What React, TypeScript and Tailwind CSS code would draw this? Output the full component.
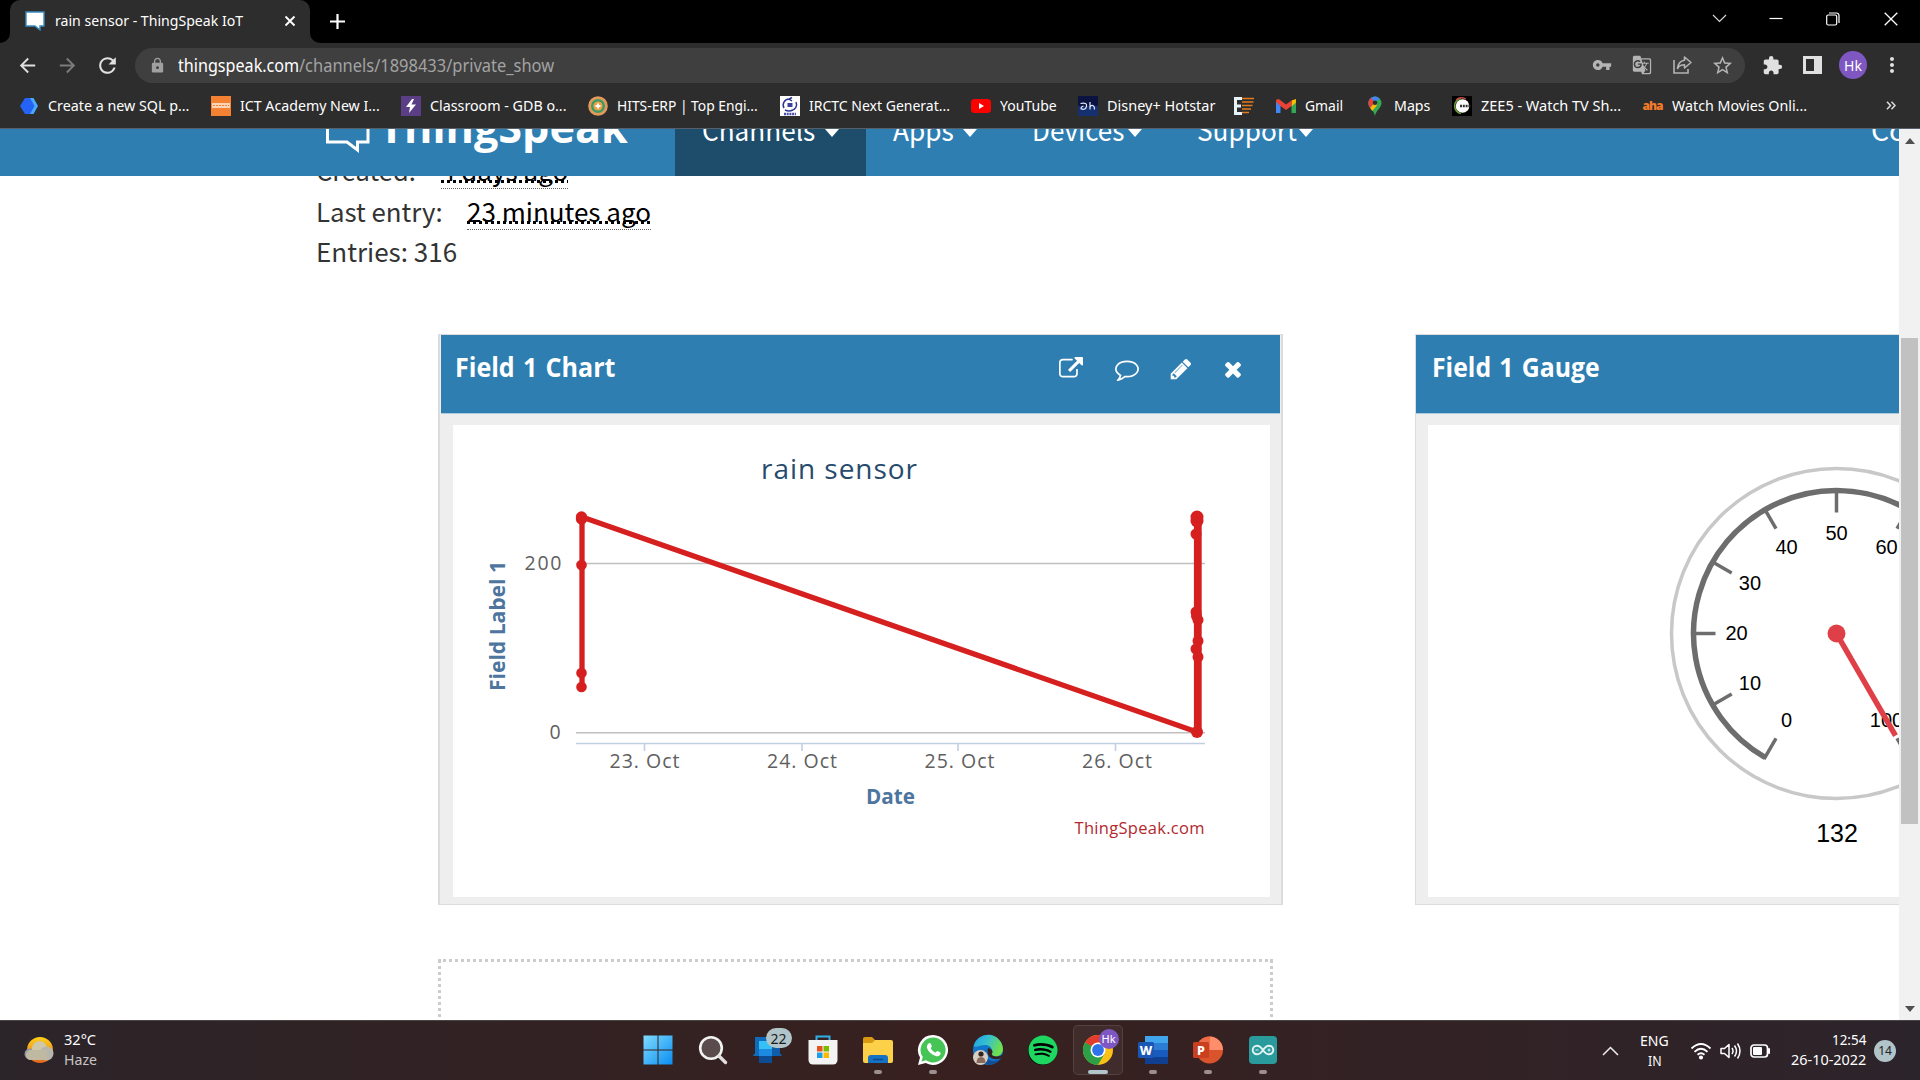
import { useLayoutEffect, useRef, useState } from "react";
import type { ReactNode } from "react";
import { FaSpotify } from "react-icons/fa";
import {
  MdArrowBack, MdArrowForward, MdRefresh, MdLock, MdVpnKey, MdStarBorder, MdExtension, MdMoreVert, MdGTranslate,
} from "react-icons/md";

/** Single-line text squeezed or stretched horizontally to an exact width. */
function Fit({ w, className = "", children }: { w: number; className?: string; children: ReactNode }) {
  const ref = useRef<HTMLSpanElement>(null);
  const [scale, setScale] = useState(1);
  useLayoutEffect(() => {
    if (ref.current) setScale(w / ref.current.offsetWidth);
  }, [w]);
  return (
    <span className={"block shrink-0 whitespace-pre " + className} style={{ width: w }}>
      <span ref={ref} className="inline-block origin-left" style={{ transform: `scaleX(${scale})` }}>
        {children}
      </span>
    </span>
  );
}

/* ---------- browser chrome ---------- */

function TabStrip() {
  return (
    <div className="flex h-[43px] bg-black">
      <div className="flex w-[10px] items-end bg-[#2d2d2d]">
        <div className="h-full w-full rounded-br-[10px] bg-black" />
      </div>
      <div className="flex w-[300px] items-center rounded-t-[10px] bg-[#2d2d2d] pl-[15px]">
        <svg className="-mt-px" width="20" height="20" viewBox="0 0 20 20">
          <path d="M1 1h18v14h-4v4l-5-4H1z" fill="#fff" stroke="#3a8bc0" strokeWidth="1.4" />
        </svg>
        <Fit w={188} className="-mt-[3px] ml-[10px] text-[15px] leading-5 text-white">rain sensor - ThingSpeak IoT</Fit>
        <svg className="-mt-px ml-[41px]" width="12" height="12" viewBox="0 0 12 12">
          <path d="M1.500 1.500l9 9M10.500 1.500l-9 9" stroke="#fff" strokeWidth="1.900" />
        </svg>
      </div>
      <div className="w-[10px] bg-[#2d2d2d]"><div className="h-full w-full rounded-bl-[10px] bg-black" /></div>
      <svg className="ml-[9px] mt-[13px]" width="17" height="17" viewBox="0 0 17 17">
        <path d="M8.500 1v15M1 8.500h15" stroke="#fff" strokeWidth="2.200" />
      </svg>
      <div className="ml-auto flex h-[37px] items-center">
        <svg className="mr-[41px]" width="15" height="9" viewBox="0 0 15 9"><path d="M1 1l6.500 6.500L14 1" fill="none" stroke="#ddd" strokeWidth="1.100" /></svg>
        <svg className="mr-[43px]" width="15" height="9" viewBox="0 0 15 9"><path d="M1.500 4.500h13" stroke="#fff" strokeWidth="1.200" /></svg>
        <svg className="mr-[44px]" width="14" height="14" viewBox="0 0 14 14">
          <rect x="0.700" y="3" width="10" height="10" rx="1.500" fill="none" stroke="#fff" strokeWidth="1.200" />
          <path d="M3 1h7.500a2.500 2.500 0 0 1 2.500 2.500V11" fill="none" stroke="#fff" strokeWidth="1.200" />
        </svg>
        <svg className="mr-[22px]" width="14" height="14" viewBox="0 0 14 14"><path d="M.7.7l12.600 12.600M13.300.7L.7 13.300" stroke="#fff" strokeWidth="1.300" /></svg>
      </div>
    </div>
  );
}

function Toolbar() {
  return (
    <div className="flex h-[44px] items-center pl-[16px] text-[#e0e0e0]">
      <MdArrowBack size={23} />
      <MdArrowForward size={23} className="ml-[17px] text-[#7c7c7c]" />
      <MdRefresh size={25} className="ml-[16px]" />
      <div className="ml-[15px] flex h-[35px] w-[1610px] items-center rounded-full bg-[#3f3f3f] pl-[14px] text-[#b4b4b4]">
        <MdLock size={17} className="text-[#a0a0a0]" />
        <Fit w={121} className="ml-[12px] text-[18px] text-white">thingspeak.com</Fit>
        <Fit w={255} className="text-[18px] text-[#a3a3a3]">/channels/1898433/private_show</Fit>
        <div className="ml-auto flex items-center pr-[11px]">
          <MdVpnKey size={20} />
          <MdGTranslate size={20} className="ml-[20px]" />
          <svg className="ml-[20px]" width="21" height="20" viewBox="0 0 21 20" fill="none" stroke="currentColor" strokeWidth="1.600">
            <path d="M2 5v13h14v-4" />
            <path d="M12.500 2l6.500 5.500-6.500 5.500V9.800C9 9.800 7 11 5.500 13.500 6 9 8 5.800 12.500 5.200z" strokeLinejoin="round" />
          </svg>
          <MdStarBorder size={23} className="ml-[18px]" />
        </div>
      </div>
      <MdExtension size={21} className="ml-[17px]" />
      <svg className="ml-[20px]" width="19" height="18" viewBox="0 0 19 18"><path d="M0 0h19v18H0zM3 3v12h8V3z" fill="#e0e0e0" fillRule="evenodd" /></svg>
      <span className="ml-[17px] flex h-7 w-7 items-center justify-center rounded-full bg-[#7e57c2] text-[14px] text-white">Hk</span>
      <MdMoreVert size={24} className="ml-[13px]" />
    </div>
  );
}

const bookmarks: { label: string; w: number; gap: number; icon: ReactNode }[] = [
  { label: "Create a new SQL p...", w: 141, gap: 22, icon: (
    <svg width="20" height="18" viewBox="0 0 20 18"><path d="M9 1h5.500l4.500 8-4.500 8H9z" fill="#4aa8ff" /><path d="M6 1h5l4.500 8-4.500 8H6L1 9z" fill="#2463f5" /></svg>) },
  { label: "ICT Academy New I...", w: 140, gap: 21, icon: (
    <svg width="20" height="20" viewBox="0 0 20 20"><path d="M0 0h20v20H0z" fill="#f58233" /><path d="M1 7h18v5H1z" fill="#fbd3b5" /><path d="M2 9.500h16" stroke="#f58233" strokeWidth="1" strokeDasharray="2 1" /></svg>) },
  { label: "Classroom - GDB o...", w: 137, gap: 21, icon: (
    <svg width="20" height="20" viewBox="0 0 20 20"><path d="M0 0h20v20H0z" fill="#5b3f86" /><path d="M11 3L5 11h4l-1 6 7-8.500h-4.500L13 3z" fill="#fff" /></svg>) },
  { label: "HITS-ERP | Top Engi...", w: 141, gap: 22, icon: (
    <svg width="20" height="20" viewBox="0 0 20 20"><circle cx="10" cy="10" r="9.800" fill="#e59a5c" /><circle cx="10" cy="10" r="7" fill="#3f9b62" /><circle cx="10" cy="10" r="4.600" fill="#f0a04b" /><path d="M10 7.500v5M7.500 10h5" stroke="#fff" strokeWidth="1.800" /></svg>) },
  { label: "IRCTC Next Generat...", w: 141, gap: 21, icon: (
    <svg width="20" height="20" viewBox="0 0 20 20"><path d="M0 0h20v20H0z" fill="#fff" /><path d="M4 12a6 6 0 0 1 5-9M16 6a6 6 0 0 1-5 8.500M5 14q4 2 8 0M12 1.500l-3 1.500 3 2" fill="none" stroke="#2c3593" strokeWidth="1.500" /><path d="M7.500 7h5v4h-5z" fill="#3a3f9a" /><path d="M4 18h12" stroke="#4b4fa8" strokeWidth="2.400" strokeDasharray="2 .7" /></svg>) },
  { label: "YouTube", w: 57, gap: 21, icon: (
    <svg width="20" height="20" viewBox="0 0 20 20"><rect y="3" width="20" height="14" rx="3.500" fill="#f00" /><path d="M8 7l5 3-5 3z" fill="#fff" /></svg>) },
  { label: "Disney+ Hotstar", w: 108, gap: 19, icon: (
    <svg width="20" height="20" viewBox="0 0 20 20"><path d="M0 0h20v10H0z" fill="#0b1440" /><path d="M0 10h20v10H0z" fill="#16306f" /><path d="M2.500 7.500q7-1.500 6 2.800t-5.500 2.500q0-2.300 2.500-2.800M12 6v7.500M12 11q1-2 2.800-1.500t1.700 4" fill="none" stroke="#dfe9ff" strokeWidth="1.200" /></svg>) },
  { label: "", w: 0, gap: 13, icon: (
    <svg width="20" height="20" viewBox="0 0 20 20"><path d="M0 2.500h8M1.500 1v18M0 10h7M0 17.500h8" stroke="#e8f2fb" strokeWidth="3" /><path d="M8 2.500h12M8 6h11.500M8 9.500h10.500M8 13h9M8 16.500h7" stroke="#e07b1f" strokeWidth="1.600" /></svg>) },
  { label: "Gmail", w: 38, gap: 22, icon: (
    <svg width="20" height="20" viewBox="0 0 20 20"><path d="M0 5v12h4.500V8z" fill="#4285f4" /><path d="M20 5v12h-4.500V8z" fill="#34a853" /><path d="M15.500 4.500L20 3v3.500l-4.500 4z" fill="#fbbc04" /><path d="M0 6V4.500q1-2.500 3.500-1L10 8.500l5.500-4v5.500L10 14 4.500 10z" fill="#ea4335" /></svg>) },
  { label: "Maps", w: 36, gap: 22, icon: (
    <svg width="20" height="20" viewBox="0 0 20 20"><path d="M3.500 7a6.500 6.500 0 0 1 13 0c0 5-5.500 7-6.500 13-1-6-6.500-8-6.500-13z" fill="#34a853" /><path d="M3.500 7a6.500 6.500 0 0 1 11-4.600L5.200 12C4 10.500 3.500 9 3.500 7z" fill="#4285f4" /><path d="M3.500 7q0-3 2-5l4.500 4-4.800 6C4 10.500 3.500 9 3.500 7z" fill="#ea4335" /><path d="M5.200 12l5-6 2 3-5 6z" fill="#fbbc04" /><circle cx="10" cy="6.800" r="2.300" fill="#2d2d2d" /></svg>) },
  { label: "ZEE5 - Watch TV Sh...", w: 140, gap: 22, icon: (
    <svg width="20" height="20" viewBox="0 0 20 20"><path d="M0 0h20v20H0z" fill="#000" /><circle cx="10.500" cy="10" r="6.800" fill="#fff" /><path d="M9 2.500a7.600 7.600 0 0 0 0 15" fill="none" stroke="#6a9b3c" strokeWidth="1.600" /><path d="M4 4q4-4 10-1" fill="none" stroke="#c04a3c" strokeWidth="1.300" /><path d="M8 10h11" stroke="#333" strokeWidth="2.500" strokeDasharray="2 .8" /></svg>) },
  { label: "Watch Movies Onli...", w: 135, gap: 9, icon: (
    <span className="flex w-5 justify-center font-[Open_Sans] text-[12px] font-extrabold leading-5 tracking-[-0.08em] text-[#f47b2a]">aha</span>) },
];

function Bookmarks() {
  return (
    <div className="flex h-[42px] items-start border-b border-[#55606a] pl-[18.500px] pt-[9px]">
      {bookmarks.map((b) => (
        <div key={b.label} className="flex shrink-0 items-center">
          <span className="mr-[9px] flex h-5 w-5 items-center justify-center">{b.icon}</span>
          {b.label && <Fit w={b.w} className="-mt-[2px] text-[15px] leading-5 text-white">{b.label}</Fit>}
          <span className="block h-1" style={{ width: b.gap }} />
        </div>
      ))}
      <svg className="ml-auto mr-[24px] mt-[5px]" width="10" height="9" viewBox="0 0 10 9"><path d="M1 .8l3.500 3.700L1 8.200M5.500.8L9 4.500 5.500 8.200" fill="none" stroke="#ddd" strokeWidth="1.500" /></svg>
    </div>
  );
}

/* ---------- ThingSpeak page ---------- */

function Caret() {
  return <svg width="16" height="9" viewBox="0 0 16 9"><path d="M1 0h14L8 8z" fill="#fff" /></svg>;
}

function NavItem({ label, w, caret, className = "" }: { label: string; w: number; caret: number; className?: string }) {
  return (
    <div className={"flex h-full shrink-0 " + className}>
      <Fit w={w} className="-mt-[14px] text-[28px] leading-[28px]">{label}</Fit>
      <span style={{ marginLeft: caret }}><Caret /></span>
    </div>
  );
}

function SiteNav() {
  return (
    <div className="flex h-[47px] overflow-hidden bg-[#2e7eb2] font-['Noto_Sans_CJK_SC',sans-serif] text-white">
      <svg className="ml-[325px] shrink-0" width="46" height="26" viewBox="0 0 46 26">
        <path d="M2.500-10v23H22l10.500 8V13H43V-10" fill="none" stroke="#fff" strokeWidth="3" />
      </svg>
      <Fit w={249} className="-mt-[32px] ml-[8px] h-[60px] font-[Open_Sans] text-[43px] font-bold leading-[60px]">ThingSpeak</Fit>
      <NavItem label="Channels" w={113} caret={9} className="ml-[47px] w-[191px] bg-[#1d4d6b] pl-[27px]" />
      <NavItem label="Apps" w={61} caret={8} className="ml-[27px]" />
      <NavItem label="Devices" w={92} caret={3} className="ml-[54px]" />
      <NavItem label="Support" w={100} caret={1} className="ml-[54px]" />
      <Fit w={160} className="-mt-[14px] ml-auto -mr-[132px] text-[28px] leading-[28px]">Commercial</Fit>
    </div>
  );
}

function Ago({ w, children }: { w: number; children: string }) {
  return (
    <span className="block h-[39px] border-b border-dotted border-[#666] text-black">
      <Fit w={w} className="leading-[40px]">
        <span className="underline decoration-dotted decoration-[2.500px] underline-offset-[-1px] [text-decoration-skip-ink:none]">{children}</span>
      </Fit>
    </span>
  );
}

function ChannelInfo() {
  return (
    <div className="-mt-[26px] flex h-[120px] shrink-0 flex-col pl-[316px] font-['Noto_Sans_CJK_SC',sans-serif] text-[26px] text-[#333]">
      <div className="flex h-[41px]"><Fit w={100} className="leading-[40px]">Created:</Fit><span className="w-[25px]" /><Ago w={127}>4 days ago</Ago></div>
      <div className="flex h-[41px]"><Fit w={127} className="leading-[40px]">Last entry:</Fit><span className="w-[24px]" /><Ago w={184}>23 minutes ago</Ago></div>
      <Fit w={141} className="leading-[38px]">Entries: 316</Fit>
    </div>
  );
}

const rightMarkers = [[1197, 517, 6.5], [1197, 521, 6.5], [1196, 534, 5.5], [1196, 612, 5.5], [1196.5, 616, 5.5], [1198, 620, 5.5], [1198, 641, 5.5], [1196, 649, 5.5], [1198, 657, 5.5], [1197, 732, 6]];
const leftMarkers = [[581.5, 517, 5.7], [581.5, 519, 5.7], [581.5, 565, 5.3], [581.5, 673, 5.3], [581.5, 687, 5.3]];
const days: [string, number][] = [["23. Oct", 644.5], ["24. Oct", 802], ["25. Oct", 959.5], ["26. Oct", 1117]];

function RainChart() {
  return (
    <svg width="817" height="472" viewBox="453 425 817 472" fontFamily="'Open Sans', sans-serif">
      <text x="761" y="478.500" fontSize="28" fill="#274b6d" textLength="156">rain sensor</text>
      <path d="M576 563.500h629M576 732.700h629" stroke="#c0c0c0" strokeWidth="1.600" />
      <path d="M576 743.500h629M644.500 743v8M802 743v8M958 743v8M1115.500 743v8" stroke="#c0d0e0" strokeWidth="1.600" />
      <g fontSize="19.500" fill="#606060">
        <text x="524.500" y="570" textLength="37">200</text>
        <text x="549.500" y="739">0</text>
        {days.map(([d, x]) => <text key={d} x={x - 35} y="768" textLength="70">{d}</text>)}
      </g>
      <g fontSize="22" fontWeight="700" fill="#4d759e">
        <text x="866" y="804" textLength="49" lengthAdjust="spacingAndGlyphs">Date</text>
        <text transform="translate(505 691) rotate(-90)" textLength="130" lengthAdjust="spacingAndGlyphs">Field Label 1</text>
      </g>
      <text x="1074.500" y="834" fontSize="16.500" fill="#b3282d" textLength="130">ThingSpeak.com</text>
      <path d="M582 687V517L1197 732" fill="none" stroke="#d62020" strokeWidth="5.300" strokeLinejoin="round" />
      <path d="M1197.800 732V517" stroke="#d62020" strokeWidth="7.800" />
      {[...leftMarkers, ...rightMarkers].map(([x, y, r]) => <circle key={`${x}-${y}`} cx={x} cy={y} r={r} fill="#d62020" />)}
    </svg>
  );
}

function Gauge() {
  const cx = 1836.5, cy = 633.5;
  const at = (v: number, r: number) => {
    const a = ((-150 + v * 3) * Math.PI) / 180;
    return [cx + r * Math.sin(a), cy - r * Math.cos(a)];
  };
  const values = [0, 10, 20, 30, 40, 50, 60, 70, 80, 90, 100];
  const [sx, sy] = at(0, 143);
  const [ex, ey] = at(100, 143);
  const [nx, ny] = at(100, 118);
  return (
    <svg width="817" height="472" viewBox="1428 425 817 472" fontFamily="'Liberation Sans', Arial, sans-serif">
      <circle cx={cx} cy={cy} r="165" fill="#fff" stroke="#c8c8c8" strokeWidth="3.500" />
      <path d={`M${sx} ${sy}A143 143 0 1 1 ${ex} ${ey}`} fill="none" stroke="#6d6d6d" strokeWidth="5.500" />
      {values.map((v) => {
        const [x1, y1] = at(v, 145), [x2, y2] = at(v, 121), [tx, ty] = at(v, 100);
        return (
          <g key={v}>
            <path d={`M${x1} ${y1}L${x2} ${y2}`} stroke="#6d6d6d" strokeWidth="3.500" />
            <text x={tx} y={ty + 6.8} textAnchor="middle" fontSize="20">{v}</text>
          </g>
        );
      })}
      <path d={`M${cx} ${cy}L${nx} ${ny}`} stroke="#df4048" strokeWidth="5.500" />
      <circle cx={cx} cy={cy} r="9" fill="#df4048" />
      <text x={cx + 0.5} y="842" textAnchor="middle" fontSize="25">132</text>
    </svg>
  );
}

const headerIcons: [string, number, string][] = [
  ["open", 32, "M1408 928v320q0 119-84.5 203.5t-203.5 84.5h-832q-119 0-203.5-84.5t-84.5-203.5v-832q0-119 84.5-203.5t203.5-84.5h704q14 0 23 9t9 23v64q0 14-9 23t-23 9h-704q-66 0-113 47t-47 113v832q0 66 47 113t113 47h832q66 0 113-47t47-113v-320q0-14 9-23t23-9h64q14 0 23 9t9 23zm384-864v512q0 26-19 45t-45 19-45-19l-176-176-652 652q-10 10-23 10t-23-10l-114-114q-10-10-10-23t10-23l652-652-176-176q-19-19-19-45t19-45 45-19h512q26 0 45 19t19 45z"],
  ["comment", 30, "M896 384q-204 0-381.500 69.500t-282 187.500-104.500 255q0 112 71.500 213.500t201.500 175.500l87 50-27 96q-24 91-70 172 152-63 275-171l43-38 57 6q69 8 130 8 204 0 381.500-69.500t282-187.500 104.500-255-104.500-255-282-187.500-381.500-69.500zm896 512q0 174-120 321.500t-326 233-450 85.500q-70 0-145-8-198 175-460 242-49 14-114 22h-5q-15 0-27-10.500t-16-27.500v-1q-3-4-.5-12t2-10 4.500-9.500l6-9 7-8.500 8-9q7-8 31-34.500t34.500-38 31-39.500 32.500-51 27-59 26-76q-157-89-247.500-220t-90.500-281q0-174 120-321.500t326-233 450-85.500 450 85.500 326 233 120 321.500z"],
  ["edit", 28, "M491 1536l91-91-235-235-91 91v107h128v128h107zm523-928q0-22-22-22-10 0-17 7l-542 542q-7 7-7 17 0 22 22 22 10 0 17-7l542-542q7-7 7-17zm-54-192l416 416-832 832h-416v-416zm683 96q0 53-37 90l-166 166-416-416 166-165q36-38 90-38 53 0 91 38l235 234q37 39 37 91z"],
  ["close", 0, "M1490 1322q0 40-28 68l-136 136q-28 28-68 28t-68-28l-294-294-294 294q-28 28-68 28t-68-28l-136-136q-28-28-28-68t28-68l294-294-294-294q-28-28-28-68t28-68l136-136q28-28 68-28t68 28l294 294 294-294q28-28 68-28t68 28l136 136q28 28 28 68t-28 68l-294 294 294 294q28 28 28 68z"],
];

function Panel({ title, titleWidth, edge, inset, icons, children }: { title: string; titleWidth: number; edge: string; inset: string; icons?: boolean; children: ReactNode }) {
  return (
    <section className={"h-[571px] w-[845px] shrink-0 border-y border-r-2 border-[#dcdcdc] bg-[#eee] " + edge}>
      <header className={"flex h-[79px] w-[839px] border-b border-[#a9cbe0] bg-[#2e7eb2] pt-[16px] " + inset}>
        <Fit w={titleWidth} className="-mt-px font-[Open_Sans] text-[26px] font-bold leading-[34px] text-white [word-spacing:0.07em]">{title}</Fit>
        {icons && (
          <div className="ml-auto mr-[35px] mt-[1px] flex h-[34px] items-center">
            {headerIcons.map(([name, gap, d]) => (
              <svg key={name} className="shrink-0" width={24} height={24} viewBox="0 0 1792 1792" fill="#fff" style={{ marginRight: gap }}>
                <path d={d} />
              </svg>
            ))}
          </div>
        )}
      </header>
      <div className="ml-[12px] mt-[11px] h-[472px] w-[817px] bg-white">{children}</div>
    </section>
  );
}

function Scrollbar() {
  return (
    <div className="flex w-[21px] flex-col items-center bg-[#f1f1f1]">
      <svg className="mt-[9px] shrink-0" width="10" height="6" viewBox="0 0 10 6"><path d="M0 6l5-6 5 6z" fill="#505050" /></svg>
      <div className="mt-[194px] h-[486px] w-[17px] bg-[#c1c1c1]" />
      <svg className="mb-[8px] mt-auto shrink-0" width="10" height="6" viewBox="0 0 10 6"><path d="M0 0l5 6 5-6z" fill="#505050" /></svg>
    </div>
  );
}

/* ---------- taskbar ---------- */

const tb = "h-[32px] w-[32px]";
const apps: { name: string; run?: boolean; active?: boolean; icon: ReactNode }[] = [
  { name: "start", icon: (
    <svg className={tb} viewBox="0 0 32 32"><defs><linearGradient id="win" x1="0" y1="0" x2="1" y2="1"><stop offset="0" stopColor="#7fdcff" /><stop offset="1" stopColor="#0a8df0" /></linearGradient></defs>
      <path d="M1.500 1.500h14v14h-14zM16.500 1.500h14v14h-14zM1.500 16.500h14v14h-14zM16.500 16.500h14v14h-14z" fill="url(#win)" /></svg>) },
  { name: "search", icon: (
    <svg className={tb} viewBox="0 0 32 32"><circle cx="14" cy="14" r="10.800" fill="#5a4c4c" stroke="#f2f2f2" strokeWidth="2.600" /><path d="M22 22l6.500 6.500" stroke="#e3dede" strokeWidth="3.400" strokeLinecap="round" /></svg>) },
  { name: "people", icon: (
    <span className="relative">
      <svg className={tb} viewBox="0 0 32 32"><path d="M3 3h16v19H1.500V20H3z" fill="#0f6cbd" /><path d="M19 8h9v12h1.500v2H19z" fill="#0f5ca8" /><path d="M7 7h13v22H7z" fill="#1b8ae0" /><path d="M7 7h13v8H7z" fill="#35c1f5" /><path d="M7 22h13v7H7z" fill="#0c4c94" /></svg>
      <span className="absolute -top-[6px] left-[14px] flex h-[20px] w-[26px] items-center justify-center rounded-full bg-[#b0c4c9] text-[14px] text-[#1b1b1b]">22</span>
    </span>) },
  { name: "store", icon: (
    <svg className={tb} viewBox="0 0 32 32"><path d="M9.500 7V2.500h13V7" fill="none" stroke="#2fb0e6" strokeWidth="2" /><path d="M1.500 6h29v20a4.500 4.500 0 0 1-4.500 4.500H6A4.500 4.500 0 0 1 1.500 26z" fill="#f3f3f3" /><path d="M10 12h5.500v5.500H10z" fill="#e8501f" /><path d="M16.500 12H22v5.500h-5.500z" fill="#7cba00" /><path d="M10 18.500h5.500V24H10z" fill="#1a9fe8" /><path d="M16.500 18.500H22V24h-5.500z" fill="#fdb900" /></svg>) },
  { name: "files", run: true, icon: (
    <svg className={tb} viewBox="0 0 32 32"><path d="M1 5a2 2 0 0 1 2-2h7l3 3v7H1z" fill="#d99a12" /><path d="M1 9h9l3-3h16a2 2 0 0 1 2 2v19a2 2 0 0 1-2 2H3a2 2 0 0 1-2-2z" fill="#fdd04a" /><path d="M6 29v-5a3 3 0 0 1 3-3h14a3 3 0 0 1 3 3v5z" fill="#1571c4" /><path d="M11 25.500h10" stroke="#0b4a8c" strokeWidth="1.500" /></svg>) },
  { name: "whatsapp", run: true, icon: (
    <svg className={tb} viewBox="0 0 32 32"><path d="M16 1a15 15 0 1 1-7.300 28.100L1 31l2-7.500A15 15 0 0 1 16 1z" fill="#fff" /><path d="M16 3.500A12.500 12.500 0 1 1 9 26.300L4.500 27.500l1.300-4.400A12.500 12.500 0 0 1 16 3.500z" fill="#46c556" /><path d="M11.500 9.500c1-1 2-.6 2.400.4l.9 2.200c.3.800-1.300 1.800-.9 2.500 1 1.800 2.400 3 4.200 3.900.8.400 1.700-1.700 2.500-1.400l2.300 1.100c1 .5 1 1.400.2 2.500-1 1.300-2.700 1.900-4.300 1.400-4.300-1.300-7.400-4-8.800-8-.5-1.700.3-3.500 1.500-4.600z" fill="#fff" /></svg>) },
  { name: "edge", icon: (
    <svg className={tb} viewBox="0 0 32 32"><defs><linearGradient id="edgeA" x1="0" y1="0" x2="1" y2=".4"><stop offset="0" stopColor="#1f9be8" /><stop offset=".5" stopColor="#35c0cf" /><stop offset="1" stopColor="#6fe04c" /></linearGradient></defs>
      <circle cx="16" cy="16" r="15" fill="#1177cc" /><path d="M1.500 12A15 15 0 0 1 31 15c0 5-4 7.500-8 7.500-3 0-5-1.500-4-3 2.500-3.500 0-8.500-6-8.500-5 0-9 3-11.500 1z" fill="url(#edgeA)" /><path d="M14 16c-2 6 2 11 8 11 3 0 6-1.500 8-3.500C27 28 22 31 17 31c-8-2-10-11-3-15z" fill="#124f96" /><path d="M16 14q5 1 4.500 4.500-2.500 3 3.500 4 5 .3 7-3-1 4-3 5-7 2-11-2-2.500-4-1-8.500z" fill="#352020" />
      <circle cx="8.500" cy="23.500" r="7.500" fill="#d8cfc4" /><circle cx="9" cy="20" r="2.600" fill="#35251f" /><path d="M4.500 29q0-6 4.500-6t4.500 6z" fill="#8a6a5a" /></svg>) },
  { name: "spotify", icon: <span className="flex h-[29px] w-[29px] items-center justify-center rounded-full bg-black"><FaSpotify size={30} color="#1ed760" className="shrink-0" /></span> },
  { name: "chrome", active: true, icon: (
    <span className="relative">
      <svg className={tb} viewBox="0 0 32 32"><circle cx="16" cy="16" r="15" fill="#fbc116" /><path d="M16 16L3 8.500A15 15 0 0 1 29 8.500H16z" fill="#e33b2e" /><path d="M3 8.500A15 15 0 0 0 16 31l6.500-11.200L16 16z" fill="#2c9f47" /><path d="M3 8.500l6.500 11.300L16 16z" fill="#2c9f47" /><circle cx="16" cy="16" r="7.500" fill="#fff" /><circle cx="16" cy="16" r="5.900" fill="#2f73ea" /></svg>
      <span className="absolute -top-[5px] left-[17px] flex h-[20px] w-[20px] items-center justify-center rounded-full bg-[#7e57c2] text-[11px] text-white">Hk</span>
    </span>) },
  { name: "word", run: true, icon: (
    <svg className={tb} viewBox="0 0 32 32"><path d="M8 2h23v7H8z" fill="#41a5ee" /><path d="M8 9h23v7H8z" fill="#2b7cd3" /><path d="M8 16h23v7H8z" fill="#185abd" /><path d="M8 23h23v7H8z" fill="#103f91" /><rect x="1" y="8" width="16" height="16" rx="1.500" fill="#1a56b4" /><text x="9" y="20.500" textAnchor="middle" fontSize="12.500" fontWeight="800" fill="#fff">W</text></svg>) },
  { name: "powerpoint", run: true, icon: (
    <svg className={tb} viewBox="0 0 32 32"><circle cx="17.500" cy="16" r="13.500" fill="#d9532c" /><path d="M17.500 2.500A13.500 13.500 0 0 1 31 16H17.500z" fill="#ff8f6b" /><path d="M17.500 2.500A13.500 13.500 0 0 0 4 16h13.500z" fill="#ed6c47" /><rect x="1" y="8" width="16" height="16" rx="1.500" fill="#c8401f" /><text x="9" y="20.500" textAnchor="middle" fontSize="12.500" fontWeight="800" fill="#fff">P</text></svg>) },
  { name: "arduino", run: true, icon: (
    <svg className={tb} viewBox="0 0 32 32"><rect x="2" y="2" width="28" height="28" rx="4" fill="#2a9b9c" /><path d="M16 16c-2-3-4-4.300-6-4.300a4.300 4.300 0 0 0 0 8.600c2 0 4-1.300 6-4.300s4-4.300 6-4.300a4.300 4.300 0 0 1 0 8.600c-2 0-4-1.300-6-4.300z" fill="none" stroke="#e3f3f3" strokeWidth="1.900" /><path d="M8.500 16h3M20.500 16h3M22 14.500v3" stroke="#e3f3f3" strokeWidth="1.100" /></svg>) },
];

function Taskbar() {
  return (
    <div className="flex h-[60px] border-t border-[#4a4444] bg-linear-to-r from-[#2b2429] via-[#38201f] to-[#2c242b] text-white">
      <div className="flex w-[630px] shrink-0 items-center pl-[24px]">
        <svg width="31" height="34" viewBox="0 0 31 34"><defs><linearGradient id="sun" x1="0" y1="0" x2="0" y2="1"><stop offset="0" stopColor="#ffd21a" /><stop offset="1" stopColor="#e5651a" /></linearGradient></defs>
          <circle cx="16" cy="16" r="13" fill="url(#sun)" /><circle cx="6" cy="20" r="5.500" fill="#8d99a8" /><circle cx="15.500" cy="14.500" r="7.500" fill="#cfc8a8" /><circle cx="22.500" cy="19.500" r="7" fill="#b7b6ae" /><path d="M6 16h17v10H8a5 5 0 0 1-2-10z" fill="#bfb9a2" /></svg>
        <div className="-mt-[4px] ml-[9px] text-[15px] leading-[20px]">
          <Fit w={32}>32°C</Fit>
          <Fit w={33} className="text-[#c9c5c5]">Haze</Fit>
        </div>
      </div>
      {apps.map((a) => (
        <div key={a.name} className="flex w-[55px] shrink-0 flex-col items-center pt-[4px]">
          <div className={a.active ? "flex h-[50px] w-[50px] flex-col items-center rounded-[5px] border border-white/10 bg-white/5 pt-[8px]" : "flex h-[50px] w-[50px] flex-col items-center pt-[9px]"}>
            <span className="flex h-[32px] items-center">{a.icon}</span>
            {a.run && <span className="mt-[4px] h-[4px] w-[8px] rounded-full bg-[#9c8f90]" />}
            {a.active && <span className="mt-[4px] h-[4px] w-[20px] shrink-0 rounded-full bg-[#b0c4c9]" />}
          </div>
        </div>
      ))}
      <div className="ml-auto flex shrink-0 items-center pr-[24px]">
        <svg width="17" height="10" viewBox="0 0 17 10"><path d="M1 9l7.500-7.500L16 9" fill="none" stroke="#eee" strokeWidth="1.500" /></svg>
        <div className="-mt-[2px] ml-[21px] flex flex-col items-center text-[15px] leading-[20px]"><Fit w={29}>ENG</Fit><Fit w={14}>IN</Fit></div>
        <svg className="ml-[21px]" width="22" height="18" viewBox="0 0 22 18" fill="none" stroke="#fff" strokeWidth="1.800"><path d="M1.500 6.500q9.500-9 19 0M4.500 9.800q6.500-6 13 0M7.500 12.800q3.500-3 7 0" /><circle cx="11" cy="15.500" r="1.200" fill="#fff" /></svg>
        <svg className="ml-[8px]" width="22" height="18" viewBox="0 0 22 18" fill="none" stroke="#fff" strokeWidth="1.500"><path d="M1 6.500h3.500L9 2.500v13l-4.500-4H1z" strokeLinejoin="round" /><path d="M12 6q2 3 0 6M14.500 3.500q4 5.500 0 11M17.500 1.500q5 7.500 0 15" /></svg>
        <svg className="ml-[8px]" width="21" height="14" viewBox="0 0 21 14"><rect x="1" y="1" width="16.500" height="12" rx="3" fill="none" stroke="#fff" strokeWidth="1.700" /><rect x="3" y="3" width="9" height="8" rx="1" fill="#fff" /><path d="M19 5v4" stroke="#fff" strokeWidth="2" strokeLinecap="round" /></svg>
        <div className="-mt-[4px] ml-[20px] flex flex-col items-end text-[15px] leading-[20px]"><Fit w={34}>12:54</Fit><Fit w={75}>26-10-2022</Fit></div>
        <span className="ml-[8px] flex h-[22px] w-[22px] items-center justify-center rounded-full bg-[#b0c4c9] text-[12px] text-[#222]">14</span>
      </div>
    </div>
  );
}

export default function App() {
  return (
    <div className="flex h-[1080px] w-[1920px] flex-col overflow-hidden bg-white font-['Noto_Sans',sans-serif]">
      <div className="shrink-0 bg-[#2d2d2d]">
        <TabStrip />
        <Toolbar />
        <Bookmarks />
      </div>
      <div className="flex h-[891px] shrink-0">
        <main className="flex w-[1899px] flex-col overflow-hidden">
          <div className="z-10 shrink-0"><SiteNav /></div>
          <ChannelInfo />
          <div className="mt-[64px] flex shrink-0 gap-[132px] pl-[438px]">
            <Panel title="Field 1 Chart" titleWidth={160} edge="border-l-2 pl-px" inset="pl-[14px]" icons><RainChart /></Panel>
            <Panel title="Field 1 Gauge" titleWidth={168} edge="border-l" inset="pl-[16px]"><Gauge /></Panel>
          </div>
          <div className="ml-[438px] mt-[54px] h-[300px] w-[835px] shrink-0 border-[3px] border-dotted border-[#ccc]" />
        </main>
        <Scrollbar />
      </div>
      <Taskbar />
    </div>
  );
}
